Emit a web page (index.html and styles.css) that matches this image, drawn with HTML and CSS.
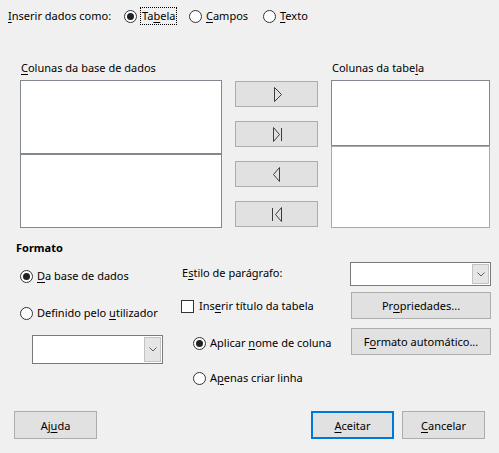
FILE: index.html
```html
<!DOCTYPE html>
<html lang="pt">
<head>
<meta charset="utf-8">
<title>Inserir colunas da base de dados</title>
<link rel="stylesheet" href="styles.css">
</head>
<body>
<div class="dialog">
  <div class="insert-row">
    <span class="insert-label"><u>I</u>nserir dados como:</span>
    <label class="radio opt-tabela"><span class="dot checked"></span><span class="focus">Ta<u>b</u>ela</span></label>
    <label class="radio opt-campos"><span class="dot"></span><span class="rtext"><u>C</u>ampos</span></label>
    <label class="radio"><span class="dot"></span><span class="rtext"><u>T</u>exto</span></label>
  </div>

  <div class="columns">
    <div class="col-label"><u>C</u>olunas da base de dados</div>
    <div></div>
    <div class="col-label">Colunas da tabe<u>l</u>a</div>

    <div class="listbox">
      <div class="list-part lb-left-top"></div>
      <div class="list-part lb-left-bottom"></div>
    </div>

    <div class="move-buttons">
      <button class="btn move"><svg width="12" height="15" viewBox="0 0 12 15"><polyline points="3.5,0.5 10.5,7.5 3.5,14.5 3.5,0.5" fill="none" stroke="#3c3c3c" stroke-width="1"/></svg></button>
      <button class="btn move"><svg width="12" height="15" viewBox="0 0 12 15"><polyline points="2.5,0.5 8.5,7.5 2.5,14.5 2.5,0.5" fill="none" stroke="#3c3c3c" stroke-width="1"/><line x1="10.5" y1="1" x2="10.5" y2="14" stroke="#3c3c3c" stroke-width="1"/></svg></button>
      <button class="btn move"><svg width="12" height="15" viewBox="0 0 12 15"><polyline points="8.5,0.5 2.5,7.5 8.5,14.5 8.5,0.5" fill="none" stroke="#3c3c3c" stroke-width="1"/></svg></button>
      <button class="btn move"><svg width="12" height="15" viewBox="0 0 12 15"><line x1="1.5" y1="1" x2="1.5" y2="14" stroke="#3c3c3c" stroke-width="1"/><polyline points="10.5,0.5 4.5,7.5 10.5,14.5 10.5,0.5" fill="none" stroke="#3c3c3c" stroke-width="1"/></svg></button>
    </div>

    <div class="listbox">
      <div class="list-part lb-right-top"></div>
      <div class="list-part lb-right-bottom"></div>
    </div>
  </div>

  <div class="format-title">Formato</div>

  <div class="format">
    <div class="fcol fcol-left">
      <label class="radio frow first"><span class="dot checked"></span><span class="rtext"><u>D</u>a base de dados</span></label>
      <label class="radio frow second"><span class="dot"></span><span class="rtext">Definido pelo <u>u</u>tilizador</span></label>
      <div class="combo combo-user"><span class="combo-field"></span><span class="combo-btn"><svg width="8" height="5" viewBox="0 0 8 5"><polyline points="0.5,0.5 4,4 7.5,0.5" fill="none" stroke="#606060" stroke-width="1"/></svg></span></div>
    </div>

    <div class="fcol fcol-mid">
      <div class="style-label">E<u>s</u>tilo de parágrafo:</div>
      <label class="check-row"><span class="box"></span><span class="ctext">Ins<u>e</u>rir título da tabela</span></label>
      <label class="radio frow sub first-sub"><span class="dot checked"></span><span class="rtext">Aplicar <u>n</u>ome de coluna</span></label>
      <label class="radio frow sub second-sub"><span class="dot"></span><span class="rtext">A<u>p</u>enas criar linha</span></label>
    </div>

    <div class="fcol fcol-right">
      <div class="combo combo-style"><span class="combo-field"></span><span class="combo-btn"><svg width="8" height="5" viewBox="0 0 8 5"><polyline points="0.5,0.5 4,4 7.5,0.5" fill="none" stroke="#606060" stroke-width="1"/></svg></span></div>
      <button class="btn side-btn props">Pr<u>o</u>priedades...</button>
      <button class="btn side-btn autofmt">F<u>o</u>rmato automático...</button>
    </div>
  </div>

  <div class="footer">
    <button class="btn foot-btn">Aj<u>u</u>da</button>
    <div class="foot-right">
      <button class="btn foot-btn default"><u>A</u>ceitar</button>
      <button class="btn foot-btn"><u>C</u>ancelar</button>
    </div>
  </div>
</div>
</body>
</html>
```

FILE: styles.css
```css
* {
  box-sizing: border-box;
}

html, body {
  margin: 0;
  padding: 0;
  background: #f0f0f0;
}

body {
  font-family: "Noto Sans", "Open Sans", "DejaVu Sans", sans-serif;
  font-size: 11px;
  color: #000;
}

u {
  text-decoration-thickness: 1px;
  text-underline-offset: 2px;
}

.dialog {
  width: 499px;
  height: 453px;
  display: flex;
  flex-direction: column;
}

/* top row */
.insert-row {
  display: flex;
  align-items: center;
  height: 18px;
  margin-top: 7px;
  padding-left: 8px;
}

.insert-label {
  width: 116px;
  line-height: 16px;
}

.radio {
  display: flex;
  align-items: center;
  line-height: 16px;
}

.opt-tabela {
  width: 65px;
}

.opt-campos {
  width: 74px;
}

.dot {
  position: relative;
  width: 13px;
  height: 13px;
  border: 1px solid #333;
  border-radius: 50%;
  background: #fff;
  flex: none;
}

.dot.checked::after {
  content: "";
  position: absolute;
  left: 2px;
  top: 2px;
  width: 7px;
  height: 7px;
  border-radius: 50%;
  background: #222;
}

.focus {
  margin-left: 3px;
  padding: 0 1px;
  height: 18px;
  line-height: 16px;
  border: 1px dotted #000;
}

.rtext {
  margin-left: 4px;
}

/* columns */
.columns {
  display: grid;
  grid-template-columns: 202px 83px 159px;
  column-gap: 13px;
  row-gap: 4px;
  margin-top: 35px;
  padding-left: 20px;
}

.col-label {
  line-height: 16px;
  padding-left: 1px;
}

.listbox {
  display: flex;
  flex-direction: column;
  height: 148px;
}

.list-part {
  background: #fff;
  border: 1px solid #828790;
}

.lb-left-top {
  height: 74px;
}

.lb-left-bottom {
  height: 74px;
}

.lb-right-top {
  height: 66px;
}

.lb-right-bottom {
  height: 82px;
  border-color: #a9a9a9;
}

.btn {
  font: inherit;
  color: #000;
  background: #e1e1e1;
  border: 1px solid #adadad;
  padding: 0;
  margin: 0;
  display: flex;
  align-items: center;
  justify-content: center;
}

.move-buttons {
  display: flex;
  flex-direction: column;
  gap: 14px;
  padding-top: 1px;
}

.move {
  width: 83px;
  height: 26px;
}

/* format section */
.format-title {
  font-weight: bold;
  line-height: 16px;
  margin-top: 12px;
  padding-left: 16px;
}

.format {
  display: grid;
  grid-template-columns: 165px 169px 141px;
  padding-left: 16px;
}

.fcol {
  display: flex;
  flex-direction: column;
  align-items: flex-start;
}

.frow {
  height: 18px;
}

.fcol-left .frow {
  padding-left: 4px;
}

.fcol-left .first {
  margin-top: 11px;
}

.fcol-left .second {
  margin-top: 19px;
}

.combo {
  display: flex;
  border: 1px solid #7a7a7a;
  background: #fff;
}

.combo-field {
  flex: 1;
}

.combo-btn {
  width: 17px;
  margin: 1px;
  background: #e5e5e5;
  border: 1px solid #c3c3c3;
  display: flex;
  align-items: center;
  justify-content: center;
}

.combo-user {
  margin-top: 13px;
  margin-left: 16px;
  width: 131px;
  height: 29px;
}

.style-label {
  margin-top: 9px;
  line-height: 16px;
  padding-left: 1px;
}

.check-row {
  display: flex;
  align-items: center;
  height: 16px;
  margin-top: 17px;
  line-height: 16px;
}

.box {
  width: 13px;
  height: 13px;
  border: 1px solid #333;
  background: #fff;
  flex: none;
}

.ctext {
  margin-left: 5px;
}

.sub {
  padding-left: 12px;
}

.first-sub {
  margin-top: 20px;
}

.second-sub {
  margin-top: 17px;
}

.combo-style {
  margin-top: 6px;
  width: 141px;
  height: 24px;
}

.side-btn {
  width: 140px;
  height: 27px;
  margin-left: 1px;
}

.props {
  margin-top: 6px;
}

.autofmt {
  margin-top: 9px;
}

/* footer */
.footer {
  margin-top: auto;
  display: flex;
  justify-content: space-between;
  padding: 0 14px 14px 14px;
}

.foot-right {
  display: flex;
  gap: 8px;
}

.foot-btn {
  width: 83px;
  height: 28px;
}

.foot-btn.default {
  border: 2px solid #0078d7;
}
```
